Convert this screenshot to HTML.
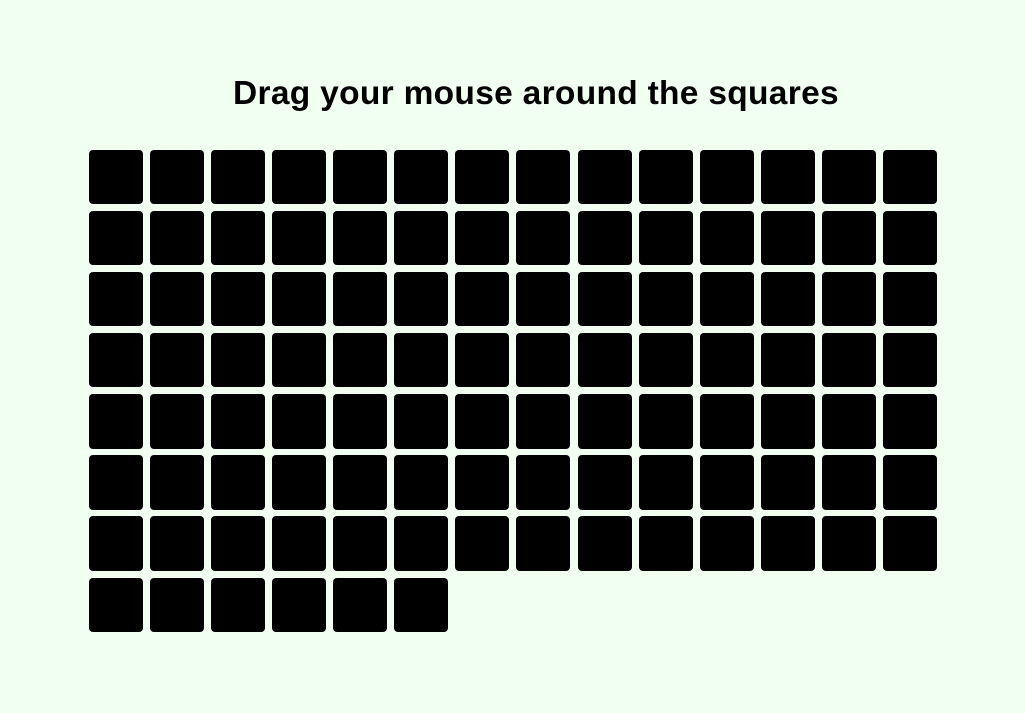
<!DOCTYPE html><html><head><style>
body{margin:0;background:#f0fff0;width:1025px;height:713px;overflow:hidden;font-family:"Liberation Sans",sans-serif}
h1{position:absolute;left:0;width:1072px;top:75px;margin:0;text-align:center;font-size:33.5px;font-weight:bold;color:#000;letter-spacing:0.3px}
.g{position:absolute;left:89px;top:150px;display:grid;grid-template-columns:repeat(14,54px);grid-auto-rows:54.2px;gap:6.9px 7.07px}
.g div{background:#000;border-radius:4px}
</style></head><body>
<h1>Drag your mouse around the squares</h1>
<div class="g">
<div></div><div></div><div></div><div></div><div></div><div></div><div></div><div></div><div></div><div></div><div></div><div></div><div></div><div></div>
<div></div><div></div><div></div><div></div><div></div><div></div><div></div><div></div><div></div><div></div><div></div><div></div><div></div><div></div>
<div></div><div></div><div></div><div></div><div></div><div></div><div></div><div></div><div></div><div></div><div></div><div></div><div></div><div></div>
<div></div><div></div><div></div><div></div><div></div><div></div><div></div><div></div><div></div><div></div><div></div><div></div><div></div><div></div>
<div></div><div></div><div></div><div></div><div></div><div></div><div></div><div></div><div></div><div></div><div></div><div></div><div></div><div></div>
<div></div><div></div><div></div><div></div><div></div><div></div><div></div><div></div><div></div><div></div><div></div><div></div><div></div><div></div>
<div></div><div></div><div></div><div></div><div></div><div></div><div></div><div></div><div></div><div></div><div></div><div></div><div></div><div></div>
<div></div><div></div><div></div><div></div><div></div><div></div>
</div>
</body></html>
